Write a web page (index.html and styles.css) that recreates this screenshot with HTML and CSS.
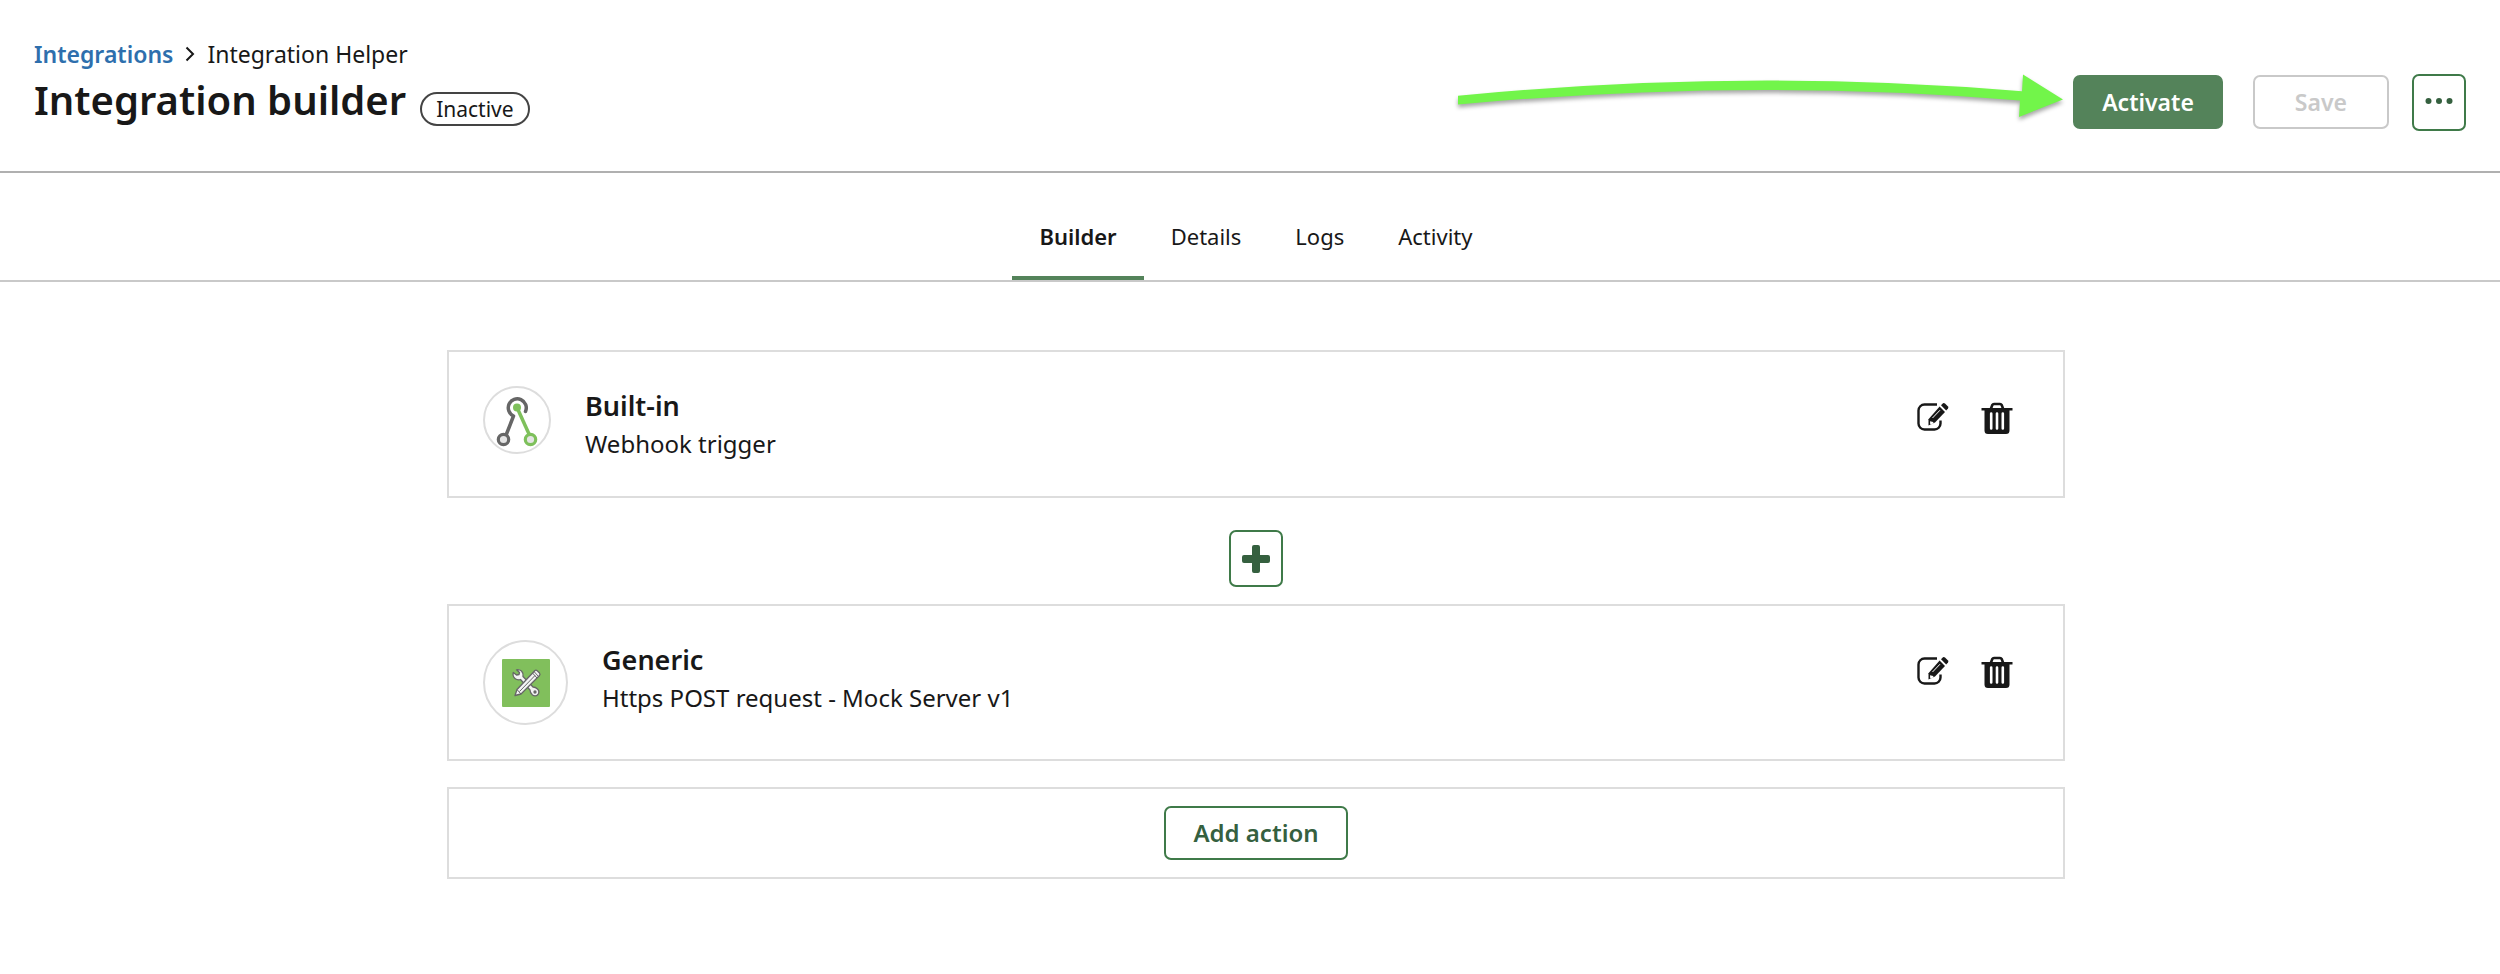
FILE: index.html
```html
<!doctype html>
<html lang="en">
<head>
    <meta charset="UTF-8">
    <meta name="viewport" content="width=device-width, initial-scale=1">
    <title>Integration builder</title>
    <link rel="stylesheet" href="styles.css">
</head>
<body>
<svg class="sprite" aria-hidden="true">
    <symbol id="icon-edit" viewBox="0 0 32 32">
        <path d="M20 2.500H7.500A6 6 0 0 0 1.500 8.500V21.500A6 6 0 0 0 7.500 27.500H17.500A6 6 0 0 0 23.500 21.500V18.500" fill="none" stroke="currentColor" stroke-width="2.400"/>
        <path d="M22.600 4.600L28 10L18 20.600L11.500 23.600V17.200Z" fill="currentColor"/>
        <path d="M24 3.200L26 1.200Q27 .6 28 1.500L31 4.600Q31.800 5.600 31 6.600L29.200 8.400Z" fill="currentColor"/>
        <path d="M15.500 16L23 8.200" stroke="#fff" stroke-width="1"/>
        <path d="M13 19.200L16.200 20L16.600 21.500L13.200 22.600Z" fill="#fff"/>
    </symbol>
    <symbol id="icon-trash" viewBox="0 0 32 32">
        <path d="M10 6.500L11.200 3.200Q11.800 2 13 2H19Q20.200 2 20.800 3.200L22 6.500" fill="none" stroke="currentColor" stroke-width="2.600"/>
        <path d="M.5 6H31.500V8.500H28.500V28.500Q28.500 32 25 32H7Q3.500 32 3.500 28.500V8.500H.5Z" fill="currentColor"/>
        <path d="M10.200 11.500V26.500M16 11.500V26.500M21.800 11.500V26.500" stroke="#fff" stroke-width="2.600" stroke-linecap="round"/>
    </symbol>
</svg>

<header class="header">
    <div class="heading">
        <nav class="breadcrumb" aria-label="Breadcrumb">
            <a href="#">Integrations</a>
            <svg class="chevron" viewBox="0 0 10 16" aria-hidden="true"><path d="M1.500 1.500L8 8L1.500 14.500" fill="none" stroke="#181818" stroke-width="2"/></svg>
            <span>Integration Helper</span>
        </nav>
        <div class="title-row">
            <h1>Integration builder</h1>
            <span class="badge">Inactive</span>
        </div>
    </div>
    <div class="actions">
        <svg class="arrow" viewBox="0 0 616 64" aria-hidden="true">
            <path d="M1 25.700Q290 -2.500 565 21.300L566 4.500L606 29.500L562 47L563 30.500Q290 7.500 1 34.500Z" fill="#72f54a"/>
        </svg>
        <button class="btn btn-primary" type="button">Activate</button>
        <button class="btn btn-save" type="button" disabled>Save</button>
        <button class="btn btn-icon" type="button" aria-label="More options">
            <svg class="dots" viewBox="0 0 28 8" aria-hidden="true"><circle cx="3.500" cy="3" r="3"/><circle cx="14" cy="3" r="3"/><circle cx="24.500" cy="3" r="3"/></svg>
        </button>
    </div>
</header>

<nav class="tabs" aria-label="Integration">
    <a class="tab on" href="#">Builder</a>
    <a class="tab" href="#">Details</a>
    <a class="tab" href="#">Logs</a>
    <a class="tab" href="#">Activity</a>
</nav>

<main class="main">
    <section class="card">
        <span class="logo">
            <svg viewBox="0 0 64 64" aria-hidden="true">
                <path d="M40.500 23.500A9 9 0 1 0 28.500 28L21.500 46" fill="none" stroke="#666" stroke-width="3.500" stroke-linecap="round" stroke-linejoin="round"/>
                <path d="M32 19.500L44 46" stroke="#7ec05b" stroke-width="3.500"/>
                <circle cx="32" cy="19.500" r="4" fill="#7ec05b"/>
                <circle cx="18.500" cy="51.500" r="5.200" fill="#e4e4e4" stroke="#666" stroke-width="3.200"/>
                <circle cx="45.500" cy="51.500" r="5.200" fill="#e4e4e4" stroke="#7ec05b" stroke-width="3.200"/>
            </svg>
        </span>
        <div class="info">
            <h2>Built-in</h2>
            <p>Webhook trigger</p>
        </div>
        <div class="tools">
            <button type="button" aria-label="Edit"><svg><use href="#icon-edit"/></svg></button>
            <button type="button" aria-label="Delete"><svg><use href="#icon-trash"/></svg></button>
        </div>
    </section>

    <button class="btn btn-icon btn-plus" type="button" aria-label="Add step">
        <svg class="plus" viewBox="0 0 28 28" aria-hidden="true"><path d="M12 0H16Q18 0 18 2V10H26Q28 10 28 12V16Q28 18 26 18H18V26Q18 28 16 28H12Q10 28 10 26V18H2Q0 18 0 16V12Q0 10 2 10H10V2Q10 0 12 0Z"/></svg>
    </button>

    <section class="card">
        <span class="logo logo-large">
            <svg viewBox="0 0 48 48" aria-hidden="true">
                <rect width="48" height="48" rx="1" fill="#81bf5c"/>
                <g stroke="#666" stroke-width="1.300" stroke-linejoin="round" fill="#f4f4f4">
                    <path d="M14.500 10.800L17.500 13.500L17 15.500L14.500 16L11.300 13.500Q10.300 17 13 19.500Q15.500 21.500 18.500 20.500L28 31Q28 34 30.500 36Q33.500 38 36 35.500Q38 32.500 35.500 30Q33.500 28 31 28L21 17.500Q21.500 14 19.500 12Q17 10 14.500 10.800Z"/>
                    <circle cx="33" cy="33" r="1" fill="#666"/>
                    <path d="M13 36.500L15 30.500L33 11.500Q34 10.500 35.500 12L37.500 14Q38.500 15.500 37.500 16.500L19 35Z"/>
                    <path d="M15 30.500L19 35M17.500 32.500L33 16.500M30.500 14L35 19M32 12.500L36.500 17.500" fill="none" stroke-width="1"/>
                </g>
            </svg>
        </span>
        <div class="info">
            <h2>Generic</h2>
            <p>Https POST request - Mock Server v1</p>
        </div>
        <div class="tools">
            <button type="button" aria-label="Edit"><svg><use href="#icon-edit"/></svg></button>
            <button type="button" aria-label="Delete"><svg><use href="#icon-trash"/></svg></button>
        </div>
    </section>

    <section class="card card-add">
        <button class="btn" type="button">Add action</button>
    </section>
</main>
</body>
</html>
```
FILE: styles.css
```css
* {
    margin: 0;
    padding: 0;
    box-sizing: border-box;
}

body {
    background: #fff;
    color: #181818;
    font-family: "Noto Sans", "Open Sans", sans-serif;
    font-size: 22px;
    line-height: 32px;
}

a {
    color: inherit;
    text-decoration: none;
}

.sprite {
    position: absolute;
    width: 0;
    height: 0;
}

.header {
    display: flex;
    justify-content: space-between;
    align-items: flex-start;
    padding: 38px 34px 37px;
    border-bottom: 2px solid #b0b0b0;
    font-size: 23px;
}

.breadcrumb {
    display: flex;
    align-items: center;
    gap: 12px;
}

.breadcrumb a {
    color: #2e6fad;
    font-weight: 600;
}

.chevron {
    width: 10px;
    height: 16px;
}

.title-row {
    display: flex;
    align-items: flex-end;
    gap: 14px;
}

h1 {
    font-size: 40px;
    font-weight: 600;
    line-height: 60px;
}

.badge {
    margin-bottom: 4px;
    padding: 0 14px;
    border: 2px solid #444;
    border-radius: 18px;
    font-size: 21px;
    line-height: 30px;
}

.actions {
    display: flex;
    align-items: center;
    padding-top: 32px;
}

.arrow {
    width: 616px;
    height: 64px;
    filter: drop-shadow(0 3px 2px rgba(0, 0, 0, .35));
}

.btn {
    height: 54px;
    padding: 0 27px;
    border: 2px solid #3f7a49;
    border-radius: 7px;
    background: #fff;
    color: #35603f;
    font: inherit;
    font-weight: 600;
    cursor: pointer;
}

.btn-primary {
    background: #54835a;
    border-color: #54835a;
    color: #fff;
}

.btn-save {
    margin: 0 23px 0 30px;
    padding: 0 40px;
    border-color: #c9c9c9;
    color: #c9c9c9;
    cursor: default;
}

.btn-icon {
    display: flex;
    justify-content: center;
    align-items: center;
    width: 54px;
    height: 57px;
    padding: 0;
}

.dots {
    width: 28px;
    height: 8px;
    fill: #35603f;
}

.plus {
    width: 28px;
    height: 28px;
    fill: #35603f;
}

.tabs {
    display: flex;
    justify-content: center;
    padding: 43px 0 0 12px;
    border-bottom: 2px solid #c9c9c9;
}

.tab {
    padding: 4px 27px 24px;
    border-bottom: 4px solid transparent;
}

.tab.on {
    border-color: #54835a;
    font-weight: 600;
}

.main {
    display: flex;
    flex-direction: column;
    align-items: center;
    padding: 68px 34px 60px 46px;
}

.card {
    display: flex;
    align-items: flex-start;
    gap: 34px;
    width: 100%;
    max-width: 1618px;
    padding: 34px 50px 34px 34px;
    border: 2px solid #ddd;
    font-size: 24px;
}

.logo {
    display: flex;
    justify-content: center;
    align-items: center;
    width: 68px;
    height: 68px;
    border: 2px solid #ddd;
    border-radius: 50%;
}

.logo svg {
    width: 64px;
    height: 64px;
}

.logo-large {
    width: 85px;
    height: 85px;
}

.logo-large svg {
    width: 48px;
    height: 48px;
}

.info {
    flex: 1;
}

.info h2 {
    font-size: 27px;
    font-weight: 600;
    line-height: 40px;
}

.info p {
    line-height: 36px;
}

.tools {
    display: flex;
    gap: 32px;
    padding-top: 16px;
}

.tools button {
    width: 32px;
    height: 32px;
    border: 0;
    background: none;
    color: #181818;
    cursor: pointer;
}

.tools svg {
    display: block;
    width: 32px;
    height: 32px;
}

.btn-plus {
    margin: 32px 0 17px;
}

.card-add {
    justify-content: center;
    margin-top: 26px;
    padding: 17px;
}
```
